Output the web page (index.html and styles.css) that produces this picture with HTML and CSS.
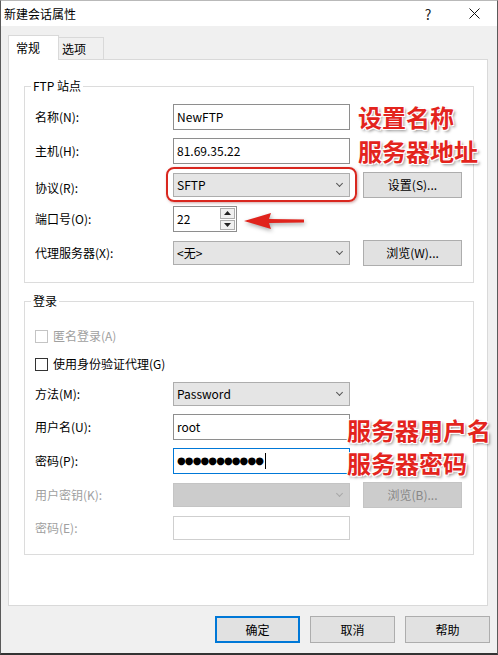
FILE: index.html
```html
<!DOCTYPE html>
<html lang="zh-CN">
<head>
  <meta charset="UTF-8" />
  <title>新建会话属性</title>
  <link rel="stylesheet" href="styles.css">
</head>
<body>
  <div class="window">
    <div class="titlebar">
      <span class="title">新建会话属性</span>
      <span class="cap-btn">?</span>
      <span class="cap-btn">
        <svg width="11" height="11" viewBox="0 0 11 11"><path d="M0.5 0.5 L10.5 10.5 M10.5 0.5 L0.5 10.5" stroke="#111" stroke-width="1" fill="none"/></svg>
      </span>
    </div>

    <div class="content">
      <div class="tabs">
        <div class="tab active">常规</div>
        <div class="tab">选项</div>
      </div>

      <div class="panel">
        <fieldset class="group site">
          <legend>FTP 站点</legend>
          <div class="rows">
            <div class="row">
              <label>名称(N):</label>
              <div class="input">NewFTP</div>
            </div>
            <div class="row">
              <label>主机(H):</label>
              <div class="input">81.69.35.22</div>
            </div>
            <div class="row">
              <label class="low">协议(R):</label>
              <div class="combo marked">SFTP<span class="chev"></span></div>
              <div class="btn">设置(S)...</div>
            </div>
            <div class="row">
              <label>端口号(O):</label>
              <div class="input spin">
                <span>22</span>
                <span class="spin-btns">
                  <span class="spin-btn"><svg width="7" height="4" viewBox="0 0 7 4"><path d="M0 4 L3.5 0 L7 4 Z" fill="#222"/></svg></span>
                  <span class="spin-btn"><svg width="7" height="4" viewBox="0 0 7 4"><path d="M0 0 L3.5 4 L7 0 Z" fill="#222"/></svg></span>
                </span>
              </div>
            </div>
            <div class="row">
              <label>代理服务器(X):</label>
              <div class="combo">&lt;无&gt;<span class="chev"></span></div>
              <div class="btn">浏览(W)...</div>
            </div>
          </div>
        </fieldset>

        <fieldset class="group login">
          <legend>登录</legend>
          <div class="rows">
            <div class="check disabled"><span class="box"></span>匿名登录(A)</div>
            <div class="check"><span class="box"></span>使用身份验证代理(G)</div>
            <div class="row short">
              <label>方法(M):</label>
              <div class="combo">Password<span class="chev"></span></div>
            </div>
            <div class="row">
              <label>用户名(U):</label>
              <div class="input">root</div>
            </div>
            <div class="row">
              <label>密码(P):</label>
              <div class="input focus"><span class="dots">●●●●●●●●●●●</span><span class="caret"></span></div>
            </div>
            <div class="row">
              <label class="dim">用户密钥(K):</label>
              <div class="combo off"><span class="chev"></span></div>
              <div class="btn off">浏览(B)...</div>
            </div>
            <div class="row short">
              <label class="dim">密码(E):</label>
              <div class="input off"></div>
            </div>
          </div>
        </fieldset>
      </div>

      <div class="footer">
        <div class="btn wide default">确定</div>
        <div class="btn wide">取消</div>
        <div class="btn wide">帮助</div>
      </div>
    </div>

    <!-- annotations drawn over the screenshot -->
    <div class="note note-site">设置名称<br>服务器地址</div>
    <div class="note note-login">服务器用户名<br>服务器密码</div>
    <svg class="arrow" width="64" height="20" viewBox="0 0 64 20">
      <path d="M1 10 L28 2 L26 8 L61 8.5 L61 11.5 L26 12 L28 18 Z" fill="#e0231c"/>
    </svg>
  </div>
</body>
</html>
```

FILE: styles.css
```css
* {
  box-sizing: border-box;
}

body {
  margin: 0;
  font-family: "Noto Sans CJK SC", "Noto Sans", sans-serif;
  font-size: 12px;
  line-height: 16px;
  color: #000;
  background: #fff;
}

.window {
  position: relative;
  width: 498px;
  height: 655px;
  border: 1px solid #5a5a5a;
  border-top-color: #b9b9b9;
  border-bottom: 2px solid #333;
  background: #f0f0f0;
  display: flex;
  flex-direction: column;
}

.titlebar {
  height: 25px;
  background: #fff;
  display: flex;
  align-items: center;
  padding-left: 3px;
}

.title {
  flex: 1;
}

.cap-btn {
  width: 46px;
  height: 25px;
  display: flex;
  align-items: center;
  justify-content: center;
  font-size: 14px;
  color: #222;
}

.content {
  flex: 1;
  padding: 9px 9px 0 7px;
}

.tabs {
  display: flex;
  align-items: flex-end;
  height: 24px;
  position: relative;
  z-index: 1;
}

.tab {
  height: 22px;
  width: 45px;
  padding: 3px 0 0 3px;
  border: 1px solid #d9d9d9;
  border-bottom: none;
  border-left: none;
  background: #f0f0f0;
}

.tab.active {
  width: 51px;
  height: 25px;
  padding: 4px 0 0 7px;
  margin-bottom: -1px;
  border-left: 1px solid #d9d9d9;
  background: #fff;
}

.panel {
  height: 547px;
  background: #fff;
  border: 1px solid #d9d9d9;
  padding: 0 13px 0 15px;
}

.group {
  margin: 0;
  border: 1px solid #dcdcdc;
  padding: 10px 10px 16px 10px;
}

.group legend {
  padding: 0 2px;
  margin-left: -4px;
  line-height: 16px;
}

.group.site {
  margin-top: 18px;
}

.group.login {
  margin-top: 10px;
  padding-top: 17px;
  padding-bottom: 14px;
}

.rows {
  display: flex;
  flex-direction: column;
  gap: 8px;
}

.row {
  display: grid;
  grid-template-columns: 125px 177px 99px;
  column-gap: 13px;
  align-items: center;
  height: 26px;
}

.row.short {
  height: 24px;
}

.row label.low {
  margin-top: 6px;
}

.row label.dim,
.check.disabled {
  color: #a0a0a0;
}

.input,
.combo {
  position: relative;
  height: 26px;
  border: 1px solid #8e8e8e;
  background: #fff;
  padding: 4px 3px;
  white-space: nowrap;
}

.input.off {
  height: 24px;
  border-color: #cfcfcf;
}

.input.focus {
  border-color: #0078d7;
  display: flex;
  align-items: center;
}

.dots {
  font-family: "DejaVu Sans", sans-serif;
  font-size: 10px;
  letter-spacing: -0.9px;
}

.caret {
  width: 1px;
  height: 16px;
  background: #000;
  margin-left: 2px;
}

.combo {
  height: 24px;
  padding-top: 3px;
  background: #e5e5e5;
  border-color: #adadad;
}

.combo.off {
  background: #cccccc;
  border-color: #c4c4c4;
}

.chev {
  position: absolute;
  right: 7px;
  top: 7px;
  width: 5px;
  height: 5px;
  border-right: 1px solid #555;
  border-bottom: 1px solid #555;
  transform: rotate(45deg);
}

.combo.off .chev {
  border-color: #a8a8a8;
}

.combo.marked::after {
  content: "";
  position: absolute;
  inset: -7px -8px -6px -8px;
  border: 2px solid #d9271f;
  border-radius: 8px;
  box-shadow: 1px 1px 3px rgba(120, 0, 0, 0.35);
}

.spin {
  width: 64px;
  display: flex;
  justify-content: space-between;
  padding: 1px 1px 1px 3px;
}

.spin > span:first-child {
  padding-top: 3px;
}

.spin-btns {
  display: flex;
  flex-direction: column;
  gap: 1px;
}

.spin-btn {
  width: 15px;
  height: 11px;
  border: 1px solid #adadad;
  background: #f0f0f0;
  display: flex;
  align-items: center;
  justify-content: center;
}

.btn {
  height: 26px;
  border: 1px solid #adadad;
  background: #e1e1e1;
  display: flex;
  align-items: center;
  justify-content: center;
}

.btn.off {
  background: #cccccc;
  border-color: #c4c4c4;
  color: #888;
}

.check {
  display: flex;
  align-items: center;
  gap: 5px;
  height: 20px;
}

.box {
  width: 13px;
  height: 13px;
  border: 1px solid #333;
  background: #fff;
}

.check.disabled .box {
  border-color: #c4c4c4;
}

.footer {
  display: flex;
  justify-content: flex-end;
  gap: 10px;
  padding-top: 10px;
  margin-right: -2px;
}

.btn.wide {
  width: 85px;
  height: 27px;
}

.btn.default {
  border-color: #0078d7;
  box-shadow: inset 0 0 0 1px #0078d7;
}

.note {
  position: absolute;
  color: #e3241d;
  font-size: 24px;
  line-height: 34px;
  font-weight: 700;
  white-space: nowrap;
  text-shadow:
    -1px -1px 0 #fff, 1px -1px 0 #fff, -1px 1px 0 #fff, 1px 1px 0 #fff,
    2px 2px 3px rgba(0, 0, 0, 0.45);
}

.note-site {
  left: 357px;
  top: 99px;
}

.note-login {
  left: 346px;
  top: 412px;
  line-height: 33px;
}

.arrow {
  position: absolute;
  left: 242px;
  top: 210px;
  filter: drop-shadow(1px 2px 2px rgba(0, 0, 0, 0.35));
}
```
